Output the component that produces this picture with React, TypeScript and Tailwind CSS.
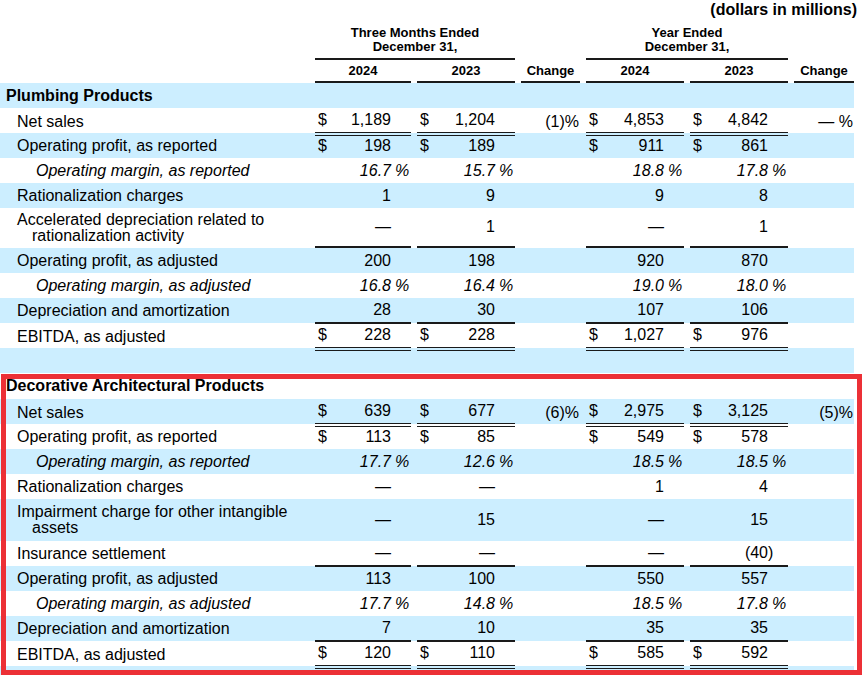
import React from "react";

type Row = {
  label: string;
  line2?: string;
  kind: "head" | "item" | "sub" | "blank";
  vals?: string[];
  line?: "single" | "double";
  h?: string;
};

const GRID =
  "grid grid-cols-[309px_96px_98px_59px_98px_98px_60px] gap-x-[6px] w-[854px]";

const plumbing: Row[] = [
  { label: "Plumbing Products", kind: "head" },
  { label: "Net sales", kind: "item", vals: ["$1,189", "$1,204", "(1)%", "$4,853", "$4,842", "— %"], line: "double" },
  { label: "Operating profit, as reported", kind: "item", vals: ["$198", "$189", "", "$911", "$861", ""] },
  { label: "Operating margin, as reported", kind: "sub", vals: ["16.7 %", "15.7 %", "", "18.8 %", "17.8 %", ""] },
  { label: "Rationalization charges", kind: "item", vals: ["1", "9", "", "9", "8", ""] },
  {
    label: "Accelerated depreciation related to",
    line2: "rationalization activity",
    kind: "item",
    vals: ["—", "1", "", "—", "1", ""],
    line: "single",
    h: "h-[40px]",
  },
  { label: "Operating profit, as adjusted", kind: "item", vals: ["200", "198", "", "920", "870", ""] },
  { label: "Operating margin, as adjusted", kind: "sub", vals: ["16.8 %", "16.4 %", "", "19.0 %", "18.0 %", ""] },
  { label: "Depreciation and amortization", kind: "item", vals: ["28", "30", "", "107", "106", ""], line: "single" },
  { label: "EBITDA, as adjusted", kind: "item", vals: ["$228", "$228", "", "$1,027", "$976", ""], line: "double" },
  { label: "", kind: "blank" },
];

const decorative: Row[] = [
  { label: "Decorative Architectural Products", kind: "head", h: "h-[26px]" },
  { label: "Net sales", kind: "item", vals: ["$639", "$677", "(6)%", "$2,975", "$3,125", "(5)%"], line: "double" },
  { label: "Operating profit, as reported", kind: "item", vals: ["$113", "$85", "", "$549", "$578", ""] },
  { label: "Operating margin, as reported", kind: "sub", vals: ["17.7 %", "12.6 %", "", "18.5 %", "18.5 %", ""] },
  { label: "Rationalization charges", kind: "item", vals: ["—", "—", "", "1", "4", ""] },
  {
    label: "Impairment charge for other intangible",
    line2: "assets",
    kind: "item",
    vals: ["—", "15", "", "—", "15", ""],
    h: "h-[42px]",
  },
  { label: "Insurance settlement", kind: "item", vals: ["—", "—", "", "—", "(40)", ""], line: "single" },
  { label: "Operating profit, as adjusted", kind: "item", vals: ["113", "100", "", "550", "557", ""] },
  { label: "Operating margin, as adjusted", kind: "sub", vals: ["17.7 %", "14.8 %", "", "18.5 %", "17.8 %", ""] },
  { label: "Depreciation and amortization", kind: "item", vals: ["7", "10", "", "35", "35", ""], line: "single" },
  { label: "EBITDA, as adjusted", kind: "item", vals: ["$120", "$110", "", "$585", "$592", ""], line: "double" },
  { label: "", kind: "blank" },
];

function Amount({ v, italic, line }: { v: string; italic: boolean; line?: string }) {
  let rest = v;
  const dollar = rest.startsWith("$");
  if (dollar) rest = rest.slice(1);
  let suffix = "";
  if (rest.endsWith(" %")) {
    rest = rest.slice(0, -2);
    suffix = "%";
  } else if (rest.startsWith("(") && rest.endsWith(")")) {
    rest = rest.slice(0, -1);
    suffix = ")";
  }
  const border =
    line === "double"
      ? "border-b-[4px] border-double border-[#1a1a1a]"
      : line === "single"
      ? "border-b-2 border-[#1a1a1a]"
      : "";
  return (
    <div className={`flex items-center h-full pl-[3px] ${border} ${italic ? "italic" : ""}`}>
      <span className="w-[12px]">{dollar ? "$" : ""}</span>
      <span className="flex-1 text-right">{rest}</span>
      <span className={`w-[20px] ${suffix === "%" ? "pl-[4px]" : ""}`}>{suffix}</span>
    </div>
  );
}

function TableRow({ row, blue }: { row: Row; blue: boolean }) {
  const h = row.h ?? "h-[25px]";
  const bg = blue ? "bg-[#cceeff]" : "bg-white";
  let labelCls = "pl-[17px]";
  if (row.kind === "head") labelCls = "pl-[6px] font-bold";
  if (row.kind === "sub") labelCls = "pl-[36px] italic";
  const italic = row.kind === "sub";

  return (
    <div className={`${GRID} ${h} ${bg}`}>
      <div className={`flex items-center ${labelCls}`}>
        {row.line2 ? (
          <div className="pl-[15px] -indent-[15px] leading-[16px]">
            {row.label}
            <br />
            {row.line2}
          </div>
        ) : (
          <span>{row.label}</span>
        )}
      </div>
      {row.vals?.map((v, i) =>
        i === 2 || i === 5 ? (
          <div key={i} className="flex items-center justify-end pr-[1px]">
            {v}
          </div>
        ) : (
          <Amount key={i} v={v} italic={italic} line={row.line} />
        )
      )}
    </div>
  );
}

export default function App() {
  const rows = [...plumbing, ...decorative];
  return (
    <div className="relative w-[863px] h-[675px] overflow-hidden bg-white text-black text-[16px] font-['Liberation_Sans',Arial,sans-serif]">
      <div className="h-[22px] leading-[20px] pr-[6px] text-right font-bold">(dollars in millions)</div>

      <div className={`${GRID} text-[13px] font-bold`}>
        <div />
        <div className="col-span-2 pt-[4px] pb-[4px] text-center leading-[14px] border-b-2 border-[#1a1a1a]">
          Three Months Ended
          <br />
          December 31,
        </div>
        <div />
        <div className="col-span-2 pt-[4px] pb-[4px] text-center leading-[14px] border-b-2 border-[#1a1a1a]">
          Year Ended
          <br />
          December 31,
        </div>
        <div />
      </div>

      <div className={`${GRID} h-[23px] text-[13px] font-bold`}>
        <div />
        {["2024", "2023", "Change", "2024", "2023", "Change"].map((t, i) => (
          <div key={i} className="flex items-center justify-center border-b-2 border-[#1a1a1a]">
            {t}
          </div>
        ))}
      </div>

      {rows.map((r, i) => (
        <TableRow key={i} row={r} blue={i % 2 === 0} />
      ))}

      <div className="absolute left-[1px] top-[374px] w-[861px] h-[301px] border-[5px] border-[#ec3036] pointer-events-none" />
    </div>
  );
}
